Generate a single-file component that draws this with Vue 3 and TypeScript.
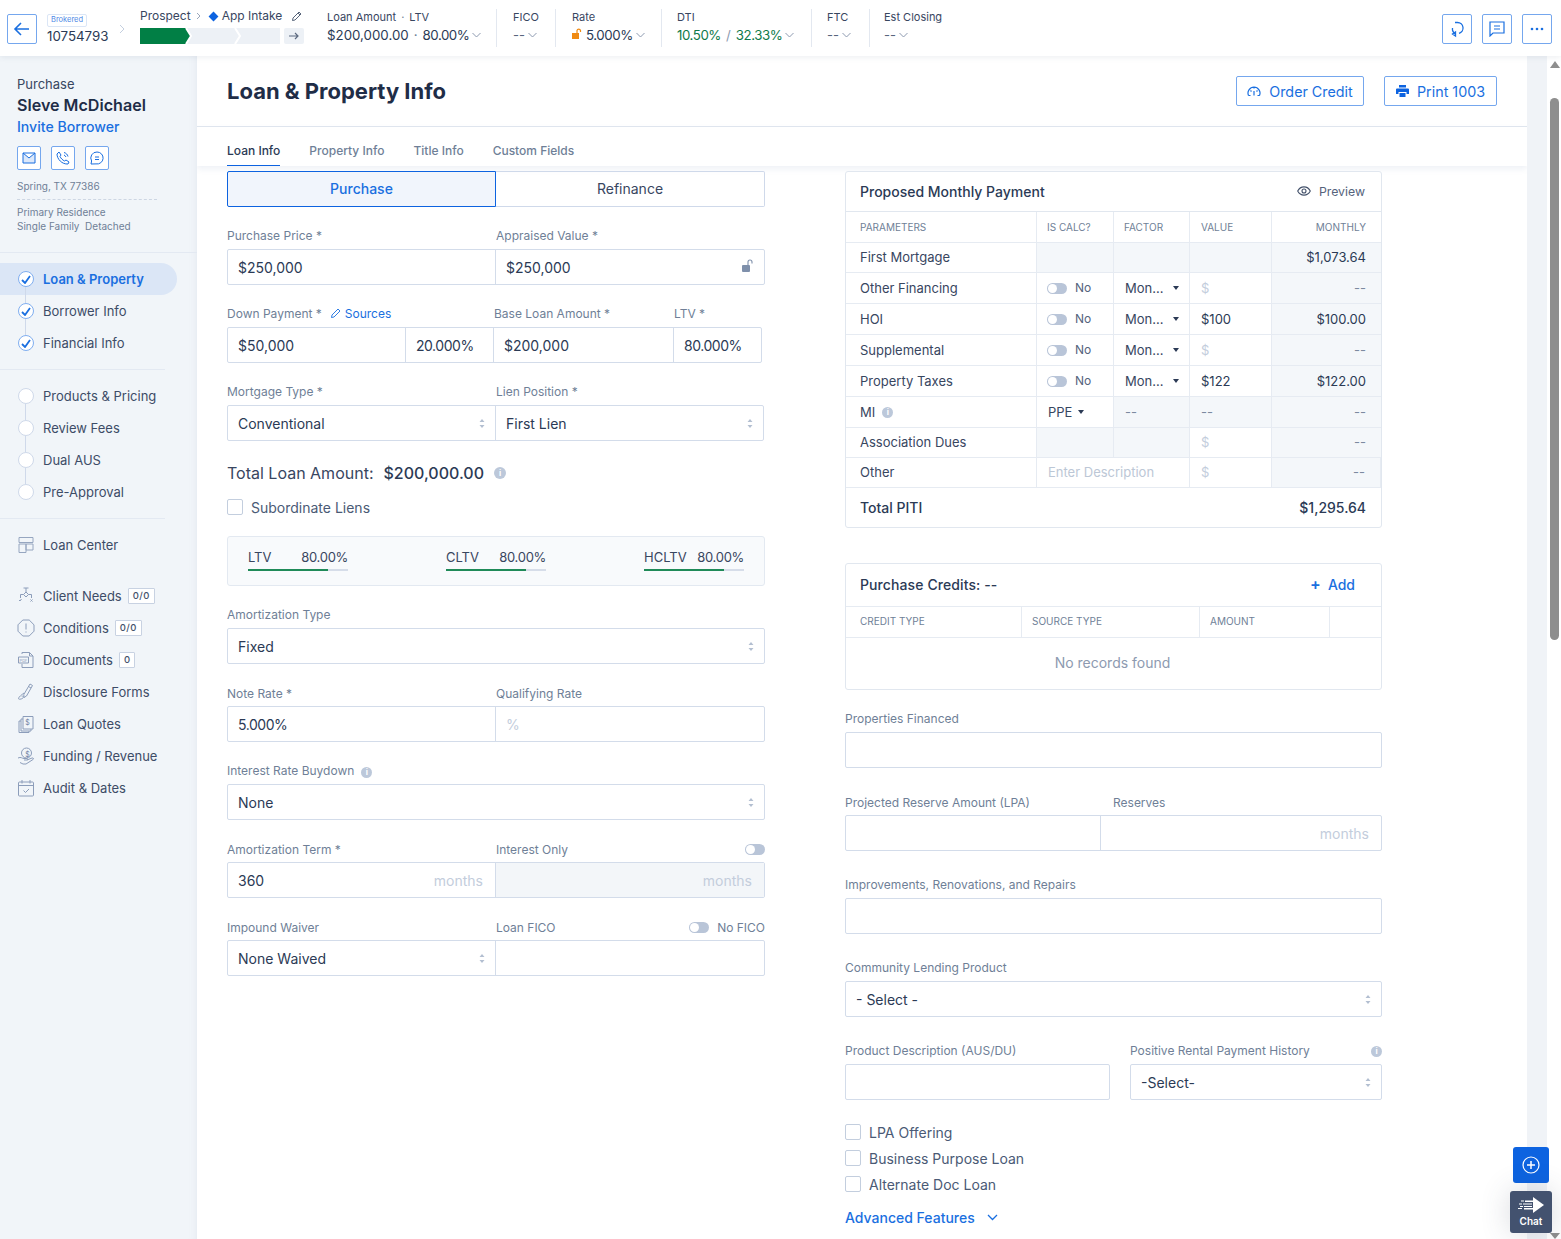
<script setup lang="ts">
interface NavItem { label: string; d: string; badge?: string; mark?: string }
const doneSteps = ['Loan & Property', 'Borrower Info', 'Financial Info']
const todoSteps = ['Products & Pricing', 'Review Fees', 'Dual AUS', 'Pre-Approval']
const toolItems: NavItem[] = [
  { label: 'Client Needs', badge: '0/0', d: 'M6.5 1h5M9 1v4M9 5l2.500 2.500L9 10 6.500 7.500zM6.500 7.500H3.500v3.500M11.500 7.500h3v3.500M2 13l1 1 1.500-2M13.500 12.500l2 2M15.500 12.500l-2 2' },
  { label: 'Conditions', badge: '0/0', d: 'M5.800 1h6.400L17 5.800v6.400L12.200 17H5.800L1 12.200V5.800zM9 4.500v6M9 12.500v1' },
  { label: 'Documents', badge: '0', mark: 'PDF', d: 'M5 3V1.500h7.500L16 5v11.500H5V13M12.500 1.500V5H16M1.500 6h10v6h-10z' },
  { label: 'Disclosure Forms', d: 'M13 1l2.500 1.500-6 10.500-2.500 1.500-.2-3zM11.500 3.500l2.500 1.500M7 10c-2 1.500-5.500 4-5.500 5.500s3.500.5 4.500-.5 0-3-1-1.500' },
  { label: 'Loan Quotes', mark: '$', d: 'M6 1.500h10v12.500H6zM6 4H4v12h10v-2M4 6H2v11.500h10V16' },
  { label: 'Funding / Revenue', mark: '$', d: 'M9.500 1a5 5 0 1 1 0 10 5 5 0 0 1 0-10zM1 11c3-1.500 4 .5 6 .5h3c1 0 1 1.500 0 1.500H7M10 13l5-2c1.500-.5 2 1 1 1.500L9 17H6l-3-1.500' },
  { label: 'Audit & Dates', d: 'M2.500 3h13a1 1 0 0 1 1 1v12a1 1 0 0 1-1 1h-13a1 1 0 0 1-1-1V4a1 1 0 0 1 1-1zM1.500 6.500h15M5 1v3.500M13 1v3.500M6.500 11.500l2 2 3.500-3.500' },
]
interface TopStat { label: string; value: string }
const plainStats: TopStat[] = [{ label: 'FICO', value: '--' }]
const toggleRows = [
  { name: 'Other Financing', value: '', monthly: '--' },
  { name: 'HOI', value: '$100', monthly: '$100.00' },
  { name: 'Supplemental', value: '', monthly: '--' },
  { name: 'Property Taxes', value: '$122', monthly: '$122.00' },
]
</script>

<template>
  <div class="app">
    <header class="topbar">
      <button class="icon-btn back" aria-label="Back">
        <svg width="18" height="18" viewBox="0 0 18 18" fill="none" stroke="#1a6fe0" stroke-width="1.600"><path d="M16 9H2.500M8 3L2 9l6 6" /></svg>
      </button>
      <div class="loan-id">
        <span class="tag">Brokered</span>
        <span class="loan-no">10754793</span>
      </div>
      <svg class="crumb-chev" width="8" height="10" viewBox="0 0 8 10" fill="none" stroke="#c4cfdf" stroke-width="1"><path d="M2 1l4 4-4 4" /></svg>
      <div class="stage">
        <div class="stage-line">
          <span>Prospect</span>
          <svg class="stage-chev" width="6" height="8" viewBox="0 0 6 8" fill="none" stroke="#9aa7bb"><path d="M1 1l3 3-3 3" /></svg>
          <i class="diamond"></i>
          <span>App Intake</span>
          <svg class="pencil" width="10" height="10" viewBox="0 0 10 10" fill="none" stroke="#44526b" stroke-width=".9"><path d="M7 1l2 2-6 6-2.500.5L1 7zM6 2l2 2" /></svg>
        </div>
        <div class="stage-bar">
          <svg width="140" height="16" viewBox="0 0 140 16">
            <rect width="140" height="16" fill="#edf1f6" />
            <path d="M0 0h46l5 8-5 8H0z" fill="#017f45" />
            <path d="M46 0l5 8-5 8" fill="none" stroke="#fff" stroke-width="2" />
            <path d="M95 0l5 8-5 8" fill="none" stroke="#fff" stroke-width="2" />
          </svg>
          <span class="stage-next">
            <svg width="10" height="8" viewBox="0 0 10 8" fill="none" stroke="#5d6a80" stroke-width="1.200"><path d="M0 4h9M6 1l3 3-3 3" /></svg>
          </span>
        </div>
      </div>
      <div class="stat s-loan">
        <span class="stat-label">Loan Amount<b class="dot">·</b>LTV</span>
        <span class="stat-value">$200,000.00<b class="dot">·</b><span class="pct">80.00%</span><svg class="chev" width="9" height="6" viewBox="0 0 9 6" fill="none" stroke="#8d9ab0"><path d="M.5 1l4 4 4-4" /></svg></span>
      </div>
      <div v-for="s in plainStats" :key="s.label" class="stat s-fico">
        <span class="stat-label">{{ s.label }}</span>
        <span class="stat-value muted">{{ s.value }}<svg class="chev" width="9" height="6" viewBox="0 0 9 6" fill="none" stroke="#8d9ab0"><path d="M.5 1l4 4 4-4" /></svg></span>
      </div>
      <div class="stat s-rate">
        <span class="stat-label">Rate</span>
        <span class="stat-value">
          <svg class="lock" width="10" height="12" viewBox="0 0 10 12"><rect x="0" y="5" width="7" height="6" fill="#f08a12" /><path d="M5 5V2.500a1.800 1.800 0 0 1 3.500 0V4" fill="none" stroke="#f08a12" stroke-width="1.200" /></svg><span class="pct">5.000%</span><svg class="chev" width="9" height="6" viewBox="0 0 9 6" fill="none" stroke="#8d9ab0"><path d="M.5 1l4 4 4-4" /></svg></span>
      </div>
      <div class="stat s-dti">
        <span class="stat-label">DTI</span>
        <span class="stat-value green"><span class="pct">10.50%</span><em>/</em><span class="pct">32.33%</span><svg class="chev" width="9" height="6" viewBox="0 0 9 6" fill="none" stroke="#8d9ab0"><path d="M.5 1l4 4 4-4" /></svg></span>
      </div>
      <div class="stat s-ftc">
        <span class="stat-label">FTC</span>
        <span class="stat-value muted">--<svg class="chev" width="9" height="6" viewBox="0 0 9 6" fill="none" stroke="#8d9ab0"><path d="M.5 1l4 4 4-4" /></svg></span>
      </div>
      <div class="stat s-close">
        <span class="stat-label">Est Closing</span>
        <span class="stat-value muted">--<svg class="chev" width="9" height="6" viewBox="0 0 9 6" fill="none" stroke="#8d9ab0"><path d="M.5 1l4 4 4-4" /></svg></span>
      </div>
      <div class="top-actions">
        <button class="icon-btn" aria-label="Refresh">
          <svg width="16" height="18" viewBox="0 0 16 18" fill="none" stroke="#1a6fe0" stroke-width="1.300"><path d="M6 2.500h2.500a5.500 5.500 0 0 1 1.500 10.800M6 13.500A5.500 5.500 0 0 1 3.500 8M6.500 12v4l-3-2z" /></svg>
        </button>
        <button class="icon-btn" aria-label="Notes">
          <svg width="16" height="16" viewBox="0 0 16 16" fill="none" stroke="#1a6fe0" stroke-width="1.200"><path d="M1 1h14v11H4l-3 3zM5 5h6M5 8h6" /></svg>
        </button>
        <button class="icon-btn" aria-label="More">
          <svg width="14" height="4" viewBox="0 0 14 4" fill="#1a6fe0"><circle cx="2" cy="2" r="1.300" /><circle cx="7" cy="2" r="1.300" /><circle cx="12" cy="2" r="1.300" /></svg>
        </button>
      </div>
    </header>

    <div class="body">
      <aside class="sidebar">
        <div class="who">
          <div class="who-type">Purchase</div>
          <div class="who-name">Sleve McDichael</div>
          <div class="who-invite">Invite Borrower</div>
          <div class="who-actions">
            <span class="mini"><svg width="14" height="12" viewBox="0 0 14 12" fill="#dce8fa" stroke="#1a6fe0"><path d="M1 1h12v10H1zM1 1l6 5 6-5" /></svg></span>
            <span class="mini"><svg width="14" height="14" viewBox="0 0 14 14" fill="none" stroke="#1a6fe0"><path d="M3 1l2 3-1 1.500c1 2 2.500 3.500 4.500 4.500L10 9l3 2-1 2c-6 .5-11-5-11-10zM8 1.500c2 .5 3.500 2 4 4M8 4c.8.300 1.500 1 2 2" /></svg></span>
            <span class="mini"><svg width="14" height="14" viewBox="0 0 14 14" fill="none" stroke="#1a6fe0"><path d="M7 1a6 6 0 1 1-1 11.900L1 13l.6-3A6 6 0 0 1 7 1zM5 6h4M5 8.500h4" /></svg></span>
          </div>
          <div class="who-city">Spring, TX 77386</div>
          <div class="who-prop">Primary Residence<br />Single Family&nbsp; Detached</div>
        </div>

        <nav class="steps first">
          <div v-for="(s, i) in doneSteps" :key="s" class="step" :class="{ active: i === 0 }">
            <span class="node done">
              <svg width="10" height="9" viewBox="0 0 10 9" fill="none" stroke="#1a6fe0" stroke-width="1.800"><path d="M1 5l3 3 5-7" /></svg>
            </span>
            <span>{{ s }}</span>
          </div>
        </nav>
        <nav class="steps second">
          <div v-for="s in todoSteps" :key="s" class="step">
            <span class="node"></span>
            <span>{{ s }}</span>
          </div>
        </nav>
        <div class="tools">
          <div class="tool center-tool">
            <svg width="18" height="18" viewBox="0 0 18 18" fill="none" stroke="#96a6c0"><path d="M2 1.500h14v5H2zM2 8h7v8.500H2zM9 8h7v6H9z" /></svg>
            <span>Loan Center</span>
          </div>
          <div v-for="t in toolItems" :key="t.label" class="tool">
            <svg width="18" height="18" viewBox="0 0 18 18" fill="none" stroke="#8c9dba" stroke-width="1">
              <path :d="t.d" />
              <text v-if="t.mark === '$'" x="10.500" y="9.500" font-size="7" fill="#6f82a3" stroke="none" text-anchor="middle">$</text>
              <text v-if="t.mark === 'PDF'" x="6.500" y="10.500" font-size="4" fill="#8c9dba" stroke="none" text-anchor="middle">PDF</text>
            </svg>
            <span>{{ t.label }}</span>
            <span v-if="t.badge" class="badge">{{ t.badge }}</span>
          </div>
        </div>
      </aside>

      <main class="main">
        <div class="page-head">
          <h1>Loan &amp; Property Info</h1>
          <div class="head-actions">
            <button class="outline order">
              <svg width="14" height="12" viewBox="0 0 14 12" fill="none" stroke="#1a6fe0" stroke-width="1.200"><path d="M1.500 10.500A6 6 0 1 1 12.500 10.500M7 10.500L7 6M3.500 5.500l1 1M10.500 5.500l-1 1M7 2.500v1M1.500 10.500h2M10.500 10.500h2" /></svg>
              Order Credit
            </button>
            <button class="outline print">
              <svg width="13" height="12" viewBox="0 0 13 12" fill="#0d63e0"><path d="M3 0h7v2.500H3zM1 3.500h11a1 1 0 0 1 1 1V9h-2.500V7h-8v2H0V4.500a1 1 0 0 1 1-1zM3.500 8h6v4h-6z" /></svg>
              Print 1003
            </button>
          </div>
        </div>
        <div class="tabs">
          <span class="tab on">Loan Info</span>
          <span class="tab">Property Info</span>
          <span class="tab">Title Info</span>
          <span class="tab">Custom Fields</span>
        </div>

        <div class="columns">
          <section class="left">
            <div class="segment">
              <span class="seg on">Purchase</span>
              <span class="seg">Refinance</span>
            </div>

            <div class="row r2">
              <label>Purchase Price *</label>
              <label class="l-2">Appraised Value *</label>
            </div>
            <div class="group">
              <div class="cell w267">$250,000</div>
              <div class="cell grow">$250,000
                <svg class="push unlock" width="12" height="13" viewBox="0 0 12 13"><rect x="0" y="6" width="8" height="7" rx="1" fill="#7f90ab" /><path d="M6 6V3a2 2 0 0 1 4 0v1.500" fill="none" stroke="#7f90ab" stroke-width="1.100" /></svg>
              </div>
            </div>

            <div class="row r-down">
              <label class="down">Down Payment *<a class="src"><svg width="10" height="10" viewBox="0 0 10 10" fill="none" stroke="#1a6fe0" stroke-width=".9"><path d="M7 1l2 2-6 6-2.500.5L1 7z" /></svg>Sources</a></label>
              <label class="l-base">Base Loan Amount *</label>
              <label>LTV *</label>
            </div>
            <div class="group short">
              <div class="cell w177">$50,000</div>
              <div class="cell w88"><span class="pct">20.000%</span></div>
              <div class="cell w180">$200,000</div>
              <div class="cell grow"><span class="pct">80.000%</span></div>
            </div>

            <div class="row r2">
              <label>Mortgage Type *</label>
              <label class="l-2">Lien Position *</label>
            </div>
            <div class="group near">
              <div class="cell w267">Conventional<svg class="push sort" width="6" height="9" viewBox="0 0 6 9" fill="#b3bfd1"><path d="M3 0l2.500 3h-5zM3 9L.5 6h5z" /></svg></div>
              <div class="cell grow">First Lien<svg class="push sort" width="6" height="9" viewBox="0 0 6 9" fill="#b3bfd1"><path d="M3 0l2.500 3h-5zM3 9L.5 6h5z" /></svg></div>
            </div>

            <div class="total">
              <span>Total Loan Amount:</span>
              <b>$200,000.00</b>
              <i class="info big">i</i>
            </div>
            <div class="check sub"><i class="box"></i>Subordinate Liens</div>

            <div class="ratios">
              <div v-for="r in ['LTV', 'CLTV', 'HCLTV']" :key="r" class="ratio">
                <div class="ratio-text"><span>{{ r }}</span><span class="pct-sm">80.00%</span></div>
                <div class="track"><div class="fill"></div></div>
              </div>
            </div>

            <label class="solo amort">Amortization Type</label>
            <div class="group"><div class="cell grow">Fixed<svg class="push sort" width="6" height="9" viewBox="0 0 6 9" fill="#b3bfd1"><path d="M3 0l2.500 3h-5zM3 9L.5 6h5z" /></svg></div></div>

            <div class="row r2 gap">
              <label>Note Rate *</label>
              <label class="l-2">Qualifying Rate</label>
            </div>
            <div class="group">
              <div class="cell w267"><span class="pct">5.000%</span></div>
              <div class="cell grow ghost">%</div>
            </div>

            <label class="solo">Interest Rate Buydown<i class="info">i</i></label>
            <div class="group"><div class="cell grow">None<svg class="push sort" width="6" height="9" viewBox="0 0 6 9" fill="#b3bfd1"><path d="M3 0l2.500 3h-5zM3 9L.5 6h5z" /></svg></div></div>

            <div class="row r2 gap">
              <label>Amortization Term *</label>
              <label class="l-2 spread">Interest Only<span class="toggle on-gray"></span></label>
            </div>
            <div class="group">
              <div class="cell w267">360<span class="push ghost unit">months</span></div>
              <div class="cell grow filled"><span class="push ghost unit">months</span></div>
            </div>

            <div class="row r2 gap">
              <label>Impound Waiver</label>
              <label class="l-2 spread">Loan FICO<span class="fico-toggle"><span class="toggle"></span>No FICO</span></label>
            </div>
            <div class="group">
              <div class="cell w267">None Waived<svg class="push sort" width="6" height="9" viewBox="0 0 6 9" fill="#b3bfd1"><path d="M3 0l2.500 3h-5zM3 9L.5 6h5z" /></svg></div>
              <div class="cell grow"></div>
            </div>
          </section>

          <section class="right">
            <div class="card pay">
              <div class="card-head">
                <span>Proposed Monthly Payment</span>
                <span class="preview">
                  <svg width="14" height="10" viewBox="0 0 14 10" fill="none" stroke="#44526b" stroke-width="1.100"><path d="M.7 5C3.500-.5 10.500-.5 13.300 5 10.500 10.500 3.500 10.500.7 5z" /><circle cx="7" cy="5" r="2" /></svg>
                  Preview
                </span>
              </div>
              <div class="pt">
                <div class="c th">PARAMETERS</div><div class="c th">IS CALC?</div><div class="c th">FACTOR</div><div class="c th">VALUE</div><div class="c th end">MONTHLY</div>

                <div class="c h30">First Mortgage</div><div class="c gray"></div><div class="c gray"></div><div class="c gray"></div><div class="c h30 gray end money">$1,073.64</div>

                <template v-for="r in toggleRows" :key="r.name">
                  <div class="c">{{ r.name }}</div>
                  <div class="c calc"><span class="toggle"></span><span class="no">No</span></div>
                  <div class="c factor">Mon...<i class="caret"></i></div>
                  <div class="c val" :class="{ dollar: !r.value }">{{ r.value || '$' }}</div>
                  <div class="c gray end" :class="r.value ? 'money' : 'dash'">{{ r.monthly }}</div>
                </template>

                <div class="c">MI<i class="info">i</i></div>
                <div class="c factor ppe">PPE<i class="caret"></i></div>
                <div class="c gray dashl">--</div>
                <div class="c gray dashl">--</div>
                <div class="c gray end dash">--</div>

                <div class="c h30">Association Dues</div><div class="c gray"></div><div class="c gray"></div><div class="c h30 val dollar">$</div><div class="c h30 gray end dash">--</div>

                <div class="c h30">Other</div><div class="c h30 span2 placeholder">Enter Description</div><div class="c h30 val dollar">$</div><div class="c h30 gray end dash">--</div>
              </div>
              <div class="pay-total"><span>Total PITI</span><span>$1,295.64</span></div>
            </div>

            <div class="card credits">
              <div class="credits-head">
                <span>Purchase Credits: --</span>
                <span class="add"><b>+</b>Add</span>
              </div>
              <div class="ct">
                <div class="c th">CREDIT TYPE</div><div class="c th">SOURCE TYPE</div><div class="c th">AMOUNT</div><div class="c th last"></div>
              </div>
              <div class="none">No records found</div>
            </div>

            <label class="solo r-first">Properties Financed</label>
            <div class="group"><div class="cell grow"></div></div>

            <div class="row reserve">
              <label>Projected Reserve Amount (LPA)</label>
              <label class="l-res">Reserves</label>
            </div>
            <div class="group">
              <div class="cell w254"></div>
              <div class="cell grow"><span class="push ghost unit">months</span></div>
            </div>

            <label class="solo">Improvements, Renovations, and Repairs</label>
            <div class="group"><div class="cell grow"></div></div>

            <label class="solo">Community Lending Product</label>
            <div class="group"><div class="cell grow">- Select -<svg class="push sort" width="6" height="9" viewBox="0 0 6 9" fill="#b3bfd1"><path d="M3 0l2.500 3h-5zM3 9L.5 6h5z" /></svg></div></div>

            <div class="split">
              <div>
                <label class="solo">Product Description (AUS/DU)</label>
                <div class="group"><div class="cell grow"></div></div>
              </div>
              <div>
                <label class="solo spread">Positive Rental Payment History<i class="info">i</i></label>
                <div class="group"><div class="cell grow">-Select-<svg class="push sort" width="6" height="9" viewBox="0 0 6 9" fill="#b3bfd1"><path d="M3 0l2.500 3h-5zM3 9L.5 6h5z" /></svg></div></div>
              </div>
            </div>

            <div class="checks">
              <div class="check"><i class="box"></i>LPA Offering</div>
              <div class="check"><i class="box"></i>Business Purpose Loan</div>
              <div class="check"><i class="box"></i>Alternate Doc Loan</div>
            </div>
            <div class="advanced">
              Advanced Features
              <svg width="11" height="7" viewBox="0 0 11 7" fill="none" stroke="#1a6fe0" stroke-width="1.300"><path d="M1 1l4.500 4.500L10 1" /></svg>
            </div>
          </section>
        </div>
      </main>
      <div class="gutter"></div>
      <div class="scrollbar">
        <i class="sb-up"></i>
        <div class="sb-thumb"></div>
        <i class="sb-down"></i>
      </div>
    </div>

    <button class="fab" aria-label="Add">
      <svg width="18" height="18" viewBox="0 0 18 18" fill="none" stroke="#fff" stroke-width="1.200"><circle cx="9" cy="9" r="8" /><path d="M9 5v8M5 9h8" stroke-width="1.500" /></svg>
    </button>
    <button class="chat" aria-label="Chat">
      <svg width="26" height="16" viewBox="0 0 26 16" fill="#fff"><path d="M15 0l11 8-11 8v-3.500H6V11h9V5H7V3.500h8z" /><path d="M3 3.500h3v1H3zM5 6.500h9v1H5zM1 6.500h3v1H1zM6 9h8v1H6zM2 9h3v1H2zM0 11h4v1H0z" /></svg>
      <span>Chat</span>
    </button>
  </div>
</template>

<style scoped>
.app { position: relative; width: 1561px; height: 1239px; overflow: hidden; display: flex; flex-direction: column; font-family: Inter, "Liberation Sans", sans-serif; color: #2b3a55; background: #fff; }
button { font-family: inherit; cursor: pointer; padding: 0; background: #fff; }
label { display: block; font-size: 12px; color: #6f7f97; }
i { font-style: normal; }
.pct { letter-spacing: -.45px; }
.pct-sm { letter-spacing: -.3px; }

.topbar { position: relative; z-index: 3; height: 56px; flex: none; display: flex; align-items: center; background: #fff; box-shadow: 0 1px 6px rgba(60, 80, 110, .1); }
.icon-btn { width: 30px; height: 30px; display: flex; align-items: center; justify-content: center; border: 1px solid #75a7ee; border-radius: 2px; }
.back { margin-left: 7px; margin-top: 1px; }
.loan-id { margin-left: 10px; width: 70px; display: flex; flex-direction: column; align-items: flex-start; }
.tag { margin-top: 1px; height: 11px; line-height: 10px; padding: 0 3px; font-size: 7.500px; color: #4f8ae6; border: 1px solid #dbe6f6; border-radius: 2px; }
.loan-no { margin-top: 1px; font-size: 13.300px; line-height: 16px; color: #2b3a55; }
.crumb-chev { margin-left: 1px; margin-top: 1px; }
.stage { margin-left: 14px; width: 187px; }
.stage-line { display: flex; align-items: center; font-size: 12px; line-height: 16px; height: 16px; margin-top: -4px; color: #38465f; }
.stage-chev { margin: 0 6px 0 5px; }
.diamond { width: 7px; height: 7px; background: #0d63e0; transform: rotate(45deg); margin-right: 5px; margin-left: 2px; }
.pencil { margin-left: 10px; }
.stage-bar { display: flex; margin-top: 4px; height: 16px; }
.stage-next { margin-left: 4px; width: 20px; height: 16px; background: #edf1f6; border-radius: 2px; display: flex; align-items: center; justify-content: center; }
.stat { display: flex; flex-direction: column; height: 38px; justify-content: center; border-right: 1px solid #e3e8f0; white-space: nowrap; }
.stat-label { margin-top: -2px; font-size: 11px; line-height: 14px; color: #38465f; }
.stat-value { margin-top: 2px; font-size: 13.300px; line-height: 18px; color: #2b3a55; display: flex; align-items: center; }
.dot { font-weight: 400; margin: 0 5px; color: #6f7f97; }
.chev { margin-left: 3px; }
.muted { color: #58667e; font-size: 13px; }
.green { color: #0f7a4a; }
.green em { font-style: normal; color: #8d9ab0; margin: 0 5px; }
.lock { margin-right: 4px; margin-top: -2px; }
.s-loan { width: 169px; }
.s-fico { width: 42px; margin-left: 16px; }
.s-rate { width: 89px; margin-left: 16px; }
.s-dti { width: 134px; margin-left: 15px; }
.s-ftc { width: 42px; margin-left: 15px; }
.s-close { margin-left: 14px; border-right: 0; }
.top-actions { margin-left: auto; margin-right: 9px; display: flex; gap: 10px; margin-top: 1px; }

.body { flex: 1; display: flex; min-height: 0; }
.sidebar { width: 197px; flex: none; background: #f1f5f9; box-shadow: inset -8px 0 8px -8px rgba(120, 140, 170, .12); overflow: hidden; }
.who { height: 197px; padding: 20px 0 0 17px; border-bottom: 1px solid #e3e9f2; box-sizing: border-box; font-size: 13px; }
.who-type { line-height: 16px; color: #38465f; }
.who-name { margin-top: 3px; font-size: 16.100px; font-weight: 600; line-height: 20px; color: #1f2d47; }
.who-invite { margin-top: 2px; font-size: 14.100px; line-height: 20px; color: #1a6fe0; font-weight: 500; }
.who-actions { margin-top: 9px; display: flex; gap: 10px; }
.mini { width: 24px; height: 24px; box-sizing: border-box; border: 1px solid #75a7ee; background: #fff; border-radius: 2px; display: flex; align-items: center; justify-content: center; }
.who-city { margin-top: 9px; width: 140px; height: 20px; font-size: 10px; line-height: 14px; color: #6f7f97; border-bottom: 1px dashed #cdd6e3; }
.who-prop { margin-top: 5px; font-size: 10px; line-height: 14px; color: #6f7f97; }
.steps { display: flex; flex-direction: column; }
.steps.first { padding: 10px 0; border-bottom: 1px solid #e3e9f2; width: 165px; }
.steps.second { padding: 10px 0; border-bottom: 1px solid #e3e9f2; width: 165px; }
.step { position: relative; height: 32px; display: flex; align-items: center; padding-left: 18px; font-size: 13px; color: #3d4c67; }
.step.active { width: 177px; box-sizing: border-box; background: #dbe6f6; border-radius: 0 16px 16px 0; color: #1a6fe0; font-weight: 600; }
.node { position: relative; z-index: 1; width: 16px; height: 16px; box-sizing: border-box; border: 1px solid #cfd9ea; border-radius: 50%; background: #fff; margin-right: 9px; display: flex; align-items: center; justify-content: center; }
.node.done { border-color: #80aef0; }
.step:not(:last-child)::after { content: ""; position: absolute; left: 25px; top: 24px; height: 16px; border-left: 1px solid #cfd9ea; }
.tools { padding-top: 10px; }
.tool { height: 32px; display: flex; align-items: center; padding-left: 17px; font-size: 13px; color: #3d4c67; }
.tool svg { margin-right: 8px; flex: none; }
.center-tool { margin-bottom: 19px; }
.badge { margin-left: 6px; height: 14px; padding: 0 4px; border: 1px solid #c8d2e2; border-radius: 1px; background: #fff; font-size: 9.500px; line-height: 14px; color: #44526b; letter-spacing: .4px; font-weight: 500; }

.main { flex: 1; min-width: 0; background: #fff; overflow: hidden; }
.page-head { height: 71px; box-sizing: border-box; border-bottom: 1px solid #e1e7ef; display: flex; align-items: center; justify-content: space-between; padding: 0 30px; }
h1 { margin: 0; font-size: 22px; font-weight: 700; color: #1f2d47; }
.head-actions { display: flex; gap: 20px; }
.outline { height: 30px; display: flex; align-items: center; justify-content: center; gap: 8px; border: 1px solid #75a7ee; border-radius: 2px; font-size: 14.300px; color: #1a6fe0; }
.order { width: 128px; }
.print { width: 113px; }
.tabs { height: 39px; box-sizing: border-box; display: flex; gap: 29px; padding-left: 30px; align-items: flex-end; box-shadow: 0 3px 6px rgba(90, 120, 170, .1); }
.tab { height: 29px; padding-top: 6px; box-sizing: border-box; font-size: 12px; line-height: 15px; color: #6f7f97; font-weight: 500; }
.tab.on { color: #2b3a55; border-bottom: 1px solid #0d63e0; }

.columns { display: flex; padding: 5px 0 0 30px; }
.left { width: 538px; }
.right { width: 537px; margin-left: 80px; }
.segment { display: flex; height: 36px; }
.seg { flex: 1; display: flex; align-items: center; justify-content: center; box-sizing: border-box; padding-bottom: 1px; border: 1px solid #cfd9ea; border-left: 0; font-size: 14px; color: #38465f; border-radius: 0 2px 2px 0; }
.seg.on { flex: none; width: 269px; border: 1px solid #0d63e0; background: #f1f5fc; color: #1a6fe0; font-weight: 500; border-radius: 2px 0 0 2px; }
.row { display: flex; margin-top: 18px; height: 20px; align-items: center; margin-bottom: 4px; }
.row.r2 label:first-child { width: 269px; flex: none; }
.r-down .down { width: 267px; flex: none; display: flex; align-items: center; }
.r-down .l-base { width: 180px; flex: none; }
.src { margin-left: 9px; display: flex; align-items: center; gap: 4px; color: #1a6fe0; }
.spread { flex: 1; display: flex; justify-content: space-between; align-items: center; }
.fico-toggle { display: flex; align-items: center; gap: 8px; }
.group { display: flex; height: 36px; box-sizing: border-box; border: 1px solid #d3dcea; border-radius: 2px; }
.group.short { width: 535px; }
.group.near { width: 537px; }
.cell { display: flex; align-items: center; box-sizing: border-box; padding: 0 10px; font-size: 14px; color: #2b3a55; border-left: 1px solid #d3dcea; white-space: nowrap; }
.cell:first-child { border-left: 0; }
.w267 { width: 267px; flex: none; }
.w177 { width: 177px; flex: none; }
.w88 { width: 88px; flex: none; }
.w180 { width: 180px; flex: none; }
.w254 { width: 254px; flex: none; }
.grow { flex: 1; }
.push { margin-left: auto; }
.unlock { margin-top: -3px; }
.ghost { color: #c3cddc; }
.unit { margin-right: 2px; }
.filled { background: #f3f6f9; }
.total { margin-top: 21px; height: 22px; display: flex; align-items: center; font-size: 16px; color: #38465f; }
.total b { margin-left: 10px; font-weight: 500; color: #2b3a55; }
.info { display: inline-flex; width: 11px; height: 11px; border-radius: 50%; margin-left: 7px; background: #bcc8da; color: #fff; font-size: 8px; font-weight: 700; align-items: center; justify-content: center; vertical-align: 0; }
.info.big { width: 12px; height: 12px; margin-left: 10px; }
.check { display: flex; align-items: center; height: 26px; font-size: 14px; color: #4a5a75; }
.check.sub { margin-top: 10px; }
.box { width: 16px; height: 16px; box-sizing: border-box; border: 1px solid #c3cede; border-radius: 2px; background: #fff; margin-right: 8px; }
.ratios { margin-top: 16px; height: 50px; box-sizing: border-box; background: #f8fafc; border: 1px solid #e3e9f1; border-radius: 3px; padding: 12px 20px 0; display: flex; justify-content: space-between; }
.ratio { width: 100px; }
.ratio-text { display: flex; justify-content: space-between; font-size: 13px; line-height: 16px; color: #38465f; }
.track { margin-top: 4px; height: 2px; background: #d6dde9; }
.fill { width: 80%; height: 2px; background: #1f8a58; }
.solo { margin-top: 18px; margin-bottom: 3px; line-height: 20px; height: 20px; }
.amort { margin-top: 19px; margin-bottom: 3px; }
.row.gap { margin-top: 19px; margin-bottom: 3px; }
.left .solo:not(.amort) { margin-top: 19px; }
.right .solo { margin-top: 24px; margin-bottom: 3px; }

.card { border: 1px solid #e1e7ef; border-radius: 3px; background: #fff; }
.pay { height: 357px; box-sizing: border-box; }
.card-head { height: 40px; padding: 0 16px 1px 14px; box-sizing: border-box; border-bottom: 1px solid #e1e7ef; display: flex; justify-content: space-between; align-items: center; font-size: 14px; font-weight: 500; color: #2b3a55; }
.preview { display: flex; align-items: center; gap: 8px; font-size: 12.300px; font-weight: 400; color: #55637c; }
.pt { display: grid; grid-template-columns: 191px 77px 76px 82px 1fr; grid-template-rows: 31px 30px 31px 31px 31px 31px 31px 30px 30px; }
.c { display: flex; align-items: center; box-sizing: border-box; padding: 0 10px 0 14px; font-size: 13px; color: #38465f; border-right: 1px solid #e6ebf2; border-bottom: 1px solid #e6ebf2; white-space: nowrap; }
.c:nth-child(5n) { border-right: 0; }
.th { font-size: 10px; color: #6f7f97; padding-left: 14px; padding-bottom: 1px; }
.pt .th:not(:first-child) { padding-left: 10px; }
.pt .th:nth-child(4) { padding-left: 11px; }
.h30 { padding-bottom: 1px; }
.gray { background: #f4f7fa; }
.end { justify-content: flex-end; padding-right: 15px !important; padding-left: 0; }
.money { color: #2b3a55; }
.dash, .dashl { color: #7c8aa0; }
.dashl { padding-left: 11px; }
.calc { padding-left: 10px; }
.no { margin-left: 8px; font-size: 12px; color: #55637c; margin-top: -1px; }
.toggle { position: relative; display: inline-block; width: 20px; height: 11px; border-radius: 6px; background: #b9c5d8; flex: none; }
.toggle::after { content: ""; position: absolute; left: 1px; top: 1px; width: 9px; height: 9px; border-radius: 50%; background: #fff; }
.on-gray::after { left: 1px; }
.factor { padding-left: 11px; justify-content: space-between; padding-right: 10px; }
.ppe { padding-left: 11px; justify-content: flex-start; gap: 6px; }
.caret { width: 0; height: 0; border-left: 3.500px solid transparent; border-right: 3.500px solid transparent; border-top: 4px solid #2b3a55; }
.val { padding-left: 11px; color: #2b3a55; }
.dollar { color: #c3cddc; }
.span2 { grid-column: span 2; padding-left: 11px; border-right: 1px solid #e6ebf2; }
.placeholder { color: #bcc7d6; }
.pay-total { height: 39px; display: flex; align-items: center; justify-content: space-between; padding: 0 15px 0 14px; font-size: 14px; font-weight: 500; color: #2b3a55; }
.credits { margin-top: 35px; height: 127px; box-sizing: border-box; }
.credits-head { height: 43px; box-sizing: border-box; display: flex; align-items: center; justify-content: space-between; padding: 0 26px 2px 14px; font-size: 14px; font-weight: 500; letter-spacing: .1px; border-bottom: 1px solid #e6ebf2; }
.add { color: #1a6fe0; display: flex; align-items: center; font-weight: 500; letter-spacing: 0; }
.add b { font-weight: 600; font-size: 16px; margin-right: 7px; line-height: 16px; }
.ct { display: grid; grid-template-columns: 176px 178px 130px 1fr; height: 31px; }
.ct .c { padding-left: 14px; padding-bottom: 2px; }
.ct .th:nth-child(n + 2) { padding-left: 10px; }
.ct .last { border-right: 0; }
.none { height: 51px; padding: 0 2px 2px 0; box-sizing: border-box; display: flex; align-items: center; justify-content: center; font-size: 14px; color: #8d9ab0; }
.right .r-first { margin-top: 19px; }
.reserve { margin-top: 24px; margin-bottom: 3px; }
.reserve label:first-child { width: 268px; flex: none; }
.split { display: grid; grid-template-columns: 265px 252px; gap: 20px; }
.checks { margin-top: 19px; }
.checks .check { height: 26px; }
.advanced { margin-top: 10px; height: 20px; display: flex; align-items: center; gap: 12px; font-size: 14px; font-weight: 500; color: #1a6fe0; }

.gutter { width: 20px; flex: none; background: #f0f3f7; }
.scrollbar { position: relative; width: 14px; flex: none; background: #fff; }
.sb-thumb { position: absolute; left: 3px; top: 42px; width: 9px; height: 542px; border-radius: 5px; background: #8e8e8e; }
.sb-up { position: absolute; left: 3px; top: 5px; width: 0; height: 0; border-left: 5px solid transparent; border-right: 5px solid transparent; border-bottom: 7px solid #8e8e8e; }
.sb-down { position: absolute; left: 3px; bottom: 0; width: 0; height: 0; border-left: 5px solid transparent; border-right: 5px solid transparent; border-top: 6px solid #8e8e8e; }
.fab { position: absolute; left: 1513px; top: 1147px; width: 36px; height: 36px; border: 0; border-radius: 3px; background: #0d63e0; display: flex; align-items: center; justify-content: center; z-index: 5; }
.chat { position: absolute; left: 1510px; top: 1191px; width: 42px; height: 42px; border: 0; border-radius: 3px; background: #43526f; color: #fff; font-size: 10px; font-weight: 600; display: flex; flex-direction: column; align-items: center; justify-content: center; gap: 2px; z-index: 5; box-shadow: 0 0 30px rgba(60, 70, 90, .2); }
</style>

<style>
html, body { margin: 0; padding: 0; overflow: hidden; }
</style>
